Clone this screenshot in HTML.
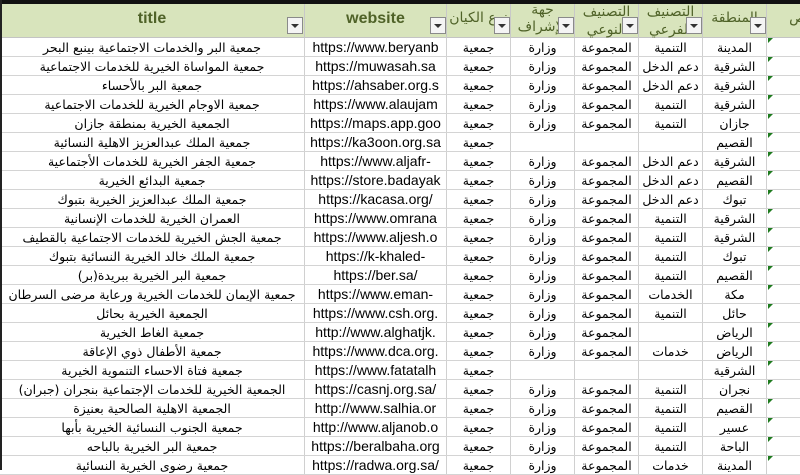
<!DOCTYPE html>
<html><head><meta charset="utf-8">
<style>
*{margin:0;padding:0;box-sizing:border-box}
body{width:800px;height:470px;overflow:hidden;background:#fff;position:relative;font-family:"DejaVu Sans","Liberation Sans",sans-serif}
.top{position:absolute;left:0;top:0;width:800px;height:4px;background:#111}
.hdr{position:absolute;left:0;top:4px;width:800px;height:34px;background:#d8e4bc;border-bottom:1px solid #c4c4c4}
.row{position:absolute;left:0;width:800px;height:19px;border-bottom:1px solid #d4d4d4}
.c{position:absolute;top:0;height:100%;border-right:1px solid #d0d0d0;display:flex;justify-content:center;align-items:center;overflow:hidden;white-space:nowrap}
.ar{direction:rtl;font-size:12.5px;color:#000}
.url{font-family:"Liberation Sans",sans-serif;font-size:14px;color:#000}
.h{position:absolute;top:0;height:34px;border-right:1px solid #c8c8c8;color:#4f6228;font-weight:bold;overflow:hidden}
.h .t{position:absolute;width:100%;text-align:center}
.fb{position:absolute;width:16px;height:17px;background:#f4f4f4;border:1px solid #8a8a8a;top:13px}
.fb:after{content:"";position:absolute;left:3px;top:6px;border-left:4px solid transparent;border-right:4px solid transparent;border-top:4px solid #333}
.tri{position:absolute;left:768px;width:0;height:0;border-top:5px solid #1e7b1e;border-right:5px solid transparent}
.left{position:absolute;left:0;top:0;width:2px;height:470px;background:#222}
</style></head><body>
<div class="top"></div>
<div class="hdr">
 <div class="h" style="left:0;width:305px"><div class="t" style="top:6px;font-family:'Liberation Sans',sans-serif;font-size:16px">title</div><div class="fb" style="left:287px"></div></div>
 <div class="h" style="left:305px;width:142px"><div class="t" style="top:6px;font-family:'Liberation Sans',sans-serif;font-size:16px">website</div><div class="fb" style="left:125px"></div></div>
 <div class="h" style="left:447px;width:64px"><div class="t ar" style="top:6px;font-size:14px;color:#4f6228;font-weight:normal">نوع الكيان</div><div class="fb" style="left:47px"></div></div>
 <div class="h" style="left:511px;width:64px"><div class="t ar" style="top:-2px;font-size:14px;color:#4f6228;font-weight:normal;line-height:17px">جهة<br>الإشراف</div><div class="fb" style="left:47px"></div></div>
 <div class="h" style="left:575px;width:64px"><div class="t ar" style="top:-1px;font-size:14px;color:#4f6228;font-weight:normal;line-height:18px">التصنيف<br>النوعي</div><div class="fb" style="left:47px"></div></div>
 <div class="h" style="left:639px;width:64px"><div class="t ar" style="top:-1px;font-size:14px;color:#4f6228;font-weight:normal;line-height:18px">التصنيف<br>الفرعي</div><div class="fb" style="left:47px"></div></div>
 <div class="h" style="left:703px;width:64px"><div class="t ar" style="top:6px;font-size:14px;color:#4f6228;font-weight:normal">المنطقة</div><div class="fb" style="left:47px"></div></div>
 <div class="h" style="left:767px;width:33px;border-right:none"><div class="ar" style="position:absolute;right:-6px;top:6px;font-size:14px;color:#4f6228;font-weight:normal">ص</div></div>
</div>

<div class="row" style="top:38px"><div class="c ar" style="left:0;width:305px">جمعية البر والخدمات الاجتماعية بينبع البحر</div><div class="c url" style="left:305px;width:142px">https://www.beryanb</div><div class="c ar" style="left:447px;width:64px">جمعية</div><div class="c ar" style="left:511px;width:64px">وزارة</div><div class="c ar" style="left:575px;width:64px">المجموعة</div><div class="c ar" style="left:639px;width:64px">التنمية</div><div class="c ar" style="left:703px;width:64px">المدينة</div><div class="tri"></div></div>
<div class="row" style="top:57px"><div class="c ar" style="left:0;width:305px">جمعية المواساة الخيرية للخدمات الاجتماعية</div><div class="c url" style="left:305px;width:142px">https://muwasah.sa</div><div class="c ar" style="left:447px;width:64px">جمعية</div><div class="c ar" style="left:511px;width:64px">وزارة</div><div class="c ar" style="left:575px;width:64px">المجموعة</div><div class="c ar" style="left:639px;width:64px">دعم الدخل</div><div class="c ar" style="left:703px;width:64px">الشرقية</div><div class="tri"></div></div>
<div class="row" style="top:76px"><div class="c ar" style="left:0;width:305px">جمعية البر بالأحساء</div><div class="c url" style="left:305px;width:142px">https://ahsaber.org.s</div><div class="c ar" style="left:447px;width:64px">جمعية</div><div class="c ar" style="left:511px;width:64px">وزارة</div><div class="c ar" style="left:575px;width:64px">المجموعة</div><div class="c ar" style="left:639px;width:64px">دعم الدخل</div><div class="c ar" style="left:703px;width:64px">الشرقية</div><div class="tri"></div></div>
<div class="row" style="top:95px"><div class="c ar" style="left:0;width:305px">جمعية الاوجام الخيرية للخدمات الاجتماعية</div><div class="c url" style="left:305px;width:142px">https://www.alaujam</div><div class="c ar" style="left:447px;width:64px">جمعية</div><div class="c ar" style="left:511px;width:64px">وزارة</div><div class="c ar" style="left:575px;width:64px">المجموعة</div><div class="c ar" style="left:639px;width:64px">التنمية</div><div class="c ar" style="left:703px;width:64px">الشرقية</div><div class="tri"></div></div>
<div class="row" style="top:114px"><div class="c ar" style="left:0;width:305px">الجمعية الخيرية بمنطقة جازان</div><div class="c url" style="left:305px;width:142px">https://maps.app.goo</div><div class="c ar" style="left:447px;width:64px">جمعية</div><div class="c ar" style="left:511px;width:64px">وزارة</div><div class="c ar" style="left:575px;width:64px">المجموعة</div><div class="c ar" style="left:639px;width:64px">التنمية</div><div class="c ar" style="left:703px;width:64px">جازان</div><div class="tri"></div></div>
<div class="row" style="top:133px"><div class="c ar" style="left:0;width:305px">جمعية الملك عبدالعزيز الاهلية النسائية</div><div class="c url" style="left:305px;width:142px">https://ka3oon.org.sa</div><div class="c ar" style="left:447px;width:64px">جمعية</div><div class="c ar" style="left:511px;width:64px"></div><div class="c ar" style="left:575px;width:64px"></div><div class="c ar" style="left:639px;width:64px"></div><div class="c ar" style="left:703px;width:64px">القصيم</div><div class="tri"></div></div>
<div class="row" style="top:152px"><div class="c ar" style="left:0;width:305px">جمعية الجفر الخيرية للخدمات الأجتماعية</div><div class="c url" style="left:305px;width:142px">https://www.aljafr-</div><div class="c ar" style="left:447px;width:64px">جمعية</div><div class="c ar" style="left:511px;width:64px">وزارة</div><div class="c ar" style="left:575px;width:64px">المجموعة</div><div class="c ar" style="left:639px;width:64px">دعم الدخل</div><div class="c ar" style="left:703px;width:64px">الشرقية</div><div class="tri"></div></div>
<div class="row" style="top:171px"><div class="c ar" style="left:0;width:305px">جمعية البدائع الخيرية</div><div class="c url" style="left:305px;width:142px">https://store.badayak</div><div class="c ar" style="left:447px;width:64px">جمعية</div><div class="c ar" style="left:511px;width:64px">وزارة</div><div class="c ar" style="left:575px;width:64px">المجموعة</div><div class="c ar" style="left:639px;width:64px">دعم الدخل</div><div class="c ar" style="left:703px;width:64px">القصيم</div><div class="tri"></div></div>
<div class="row" style="top:190px"><div class="c ar" style="left:0;width:305px">جمعية الملك عبدالعزيز الخيرية بتبوك</div><div class="c url" style="left:305px;width:142px">https://kacasa.org/</div><div class="c ar" style="left:447px;width:64px">جمعية</div><div class="c ar" style="left:511px;width:64px">وزارة</div><div class="c ar" style="left:575px;width:64px">المجموعة</div><div class="c ar" style="left:639px;width:64px">دعم الدخل</div><div class="c ar" style="left:703px;width:64px">تبوك</div><div class="tri"></div></div>
<div class="row" style="top:209px"><div class="c ar" style="left:0;width:305px">العمران الخيرية للخدمات الإنسانية</div><div class="c url" style="left:305px;width:142px">https://www.omrana</div><div class="c ar" style="left:447px;width:64px">جمعية</div><div class="c ar" style="left:511px;width:64px">وزارة</div><div class="c ar" style="left:575px;width:64px">المجموعة</div><div class="c ar" style="left:639px;width:64px">التنمية</div><div class="c ar" style="left:703px;width:64px">الشرقية</div><div class="tri"></div></div>
<div class="row" style="top:228px"><div class="c ar" style="left:0;width:305px">جمعية الجش الخيرية للخدمات الاجتماعية بالقطيف</div><div class="c url" style="left:305px;width:142px">https://www.aljesh.o</div><div class="c ar" style="left:447px;width:64px">جمعية</div><div class="c ar" style="left:511px;width:64px">وزارة</div><div class="c ar" style="left:575px;width:64px">المجموعة</div><div class="c ar" style="left:639px;width:64px">التنمية</div><div class="c ar" style="left:703px;width:64px">الشرقية</div><div class="tri"></div></div>
<div class="row" style="top:247px"><div class="c ar" style="left:0;width:305px">جمعية الملك خالد الخيرية النسائية بتبوك</div><div class="c url" style="left:305px;width:142px">https://k-khaled-</div><div class="c ar" style="left:447px;width:64px">جمعية</div><div class="c ar" style="left:511px;width:64px">وزارة</div><div class="c ar" style="left:575px;width:64px">المجموعة</div><div class="c ar" style="left:639px;width:64px">التنمية</div><div class="c ar" style="left:703px;width:64px">تبوك</div><div class="tri"></div></div>
<div class="row" style="top:266px"><div class="c ar" style="left:0;width:305px">جمعية البر الخيرية ببريدة(بر)</div><div class="c url" style="left:305px;width:142px">https://ber.sa/</div><div class="c ar" style="left:447px;width:64px">جمعية</div><div class="c ar" style="left:511px;width:64px">وزارة</div><div class="c ar" style="left:575px;width:64px">المجموعة</div><div class="c ar" style="left:639px;width:64px">التنمية</div><div class="c ar" style="left:703px;width:64px">القصيم</div><div class="tri"></div></div>
<div class="row" style="top:285px"><div class="c ar" style="left:0;width:305px">جمعية الإيمان للخدمات الخيرية ورعاية مرضى السرطان</div><div class="c url" style="left:305px;width:142px">https://www.eman-</div><div class="c ar" style="left:447px;width:64px">جمعية</div><div class="c ar" style="left:511px;width:64px">وزارة</div><div class="c ar" style="left:575px;width:64px">المجموعة</div><div class="c ar" style="left:639px;width:64px">الخدمات</div><div class="c ar" style="left:703px;width:64px">مكة</div><div class="tri"></div></div>
<div class="row" style="top:304px"><div class="c ar" style="left:0;width:305px">الجمعية الخيرية بحائل</div><div class="c url" style="left:305px;width:142px">https://www.csh.org.</div><div class="c ar" style="left:447px;width:64px">جمعية</div><div class="c ar" style="left:511px;width:64px">وزارة</div><div class="c ar" style="left:575px;width:64px">المجموعة</div><div class="c ar" style="left:639px;width:64px">التنمية</div><div class="c ar" style="left:703px;width:64px">حائل</div><div class="tri"></div></div>
<div class="row" style="top:323px"><div class="c ar" style="left:0;width:305px">جمعية الغاط الخيرية</div><div class="c url" style="left:305px;width:142px">http://www.alghatjk.</div><div class="c ar" style="left:447px;width:64px">جمعية</div><div class="c ar" style="left:511px;width:64px">وزارة</div><div class="c ar" style="left:575px;width:64px">المجموعة</div><div class="c ar" style="left:639px;width:64px"></div><div class="c ar" style="left:703px;width:64px">الرياض</div><div class="tri"></div></div>
<div class="row" style="top:342px"><div class="c ar" style="left:0;width:305px">جمعية الأطفال ذوي الإعاقة</div><div class="c url" style="left:305px;width:142px">https://www.dca.org.</div><div class="c ar" style="left:447px;width:64px">جمعية</div><div class="c ar" style="left:511px;width:64px">وزارة</div><div class="c ar" style="left:575px;width:64px">المجموعة</div><div class="c ar" style="left:639px;width:64px">خدمات</div><div class="c ar" style="left:703px;width:64px">الرياض</div><div class="tri"></div></div>
<div class="row" style="top:361px"><div class="c ar" style="left:0;width:305px">جمعية فتاة الاحساء التنموية الخيرية</div><div class="c url" style="left:305px;width:142px">https://www.fatatalh</div><div class="c ar" style="left:447px;width:64px">جمعية</div><div class="c ar" style="left:511px;width:64px"></div><div class="c ar" style="left:575px;width:64px"></div><div class="c ar" style="left:639px;width:64px"></div><div class="c ar" style="left:703px;width:64px">الشرقية</div><div class="tri"></div></div>
<div class="row" style="top:380px"><div class="c ar" style="left:0;width:305px">الجمعية الخيرية للخدمات الإجتماعية بنجران (جبران)</div><div class="c url" style="left:305px;width:142px">https://casnj.org.sa/</div><div class="c ar" style="left:447px;width:64px">جمعية</div><div class="c ar" style="left:511px;width:64px">وزارة</div><div class="c ar" style="left:575px;width:64px">المجموعة</div><div class="c ar" style="left:639px;width:64px">التنمية</div><div class="c ar" style="left:703px;width:64px">نجران</div><div class="tri"></div></div>
<div class="row" style="top:399px"><div class="c ar" style="left:0;width:305px">الجمعية الاهلية الصالحية بعنيزة</div><div class="c url" style="left:305px;width:142px">http://www.salhia.or</div><div class="c ar" style="left:447px;width:64px">جمعية</div><div class="c ar" style="left:511px;width:64px">وزارة</div><div class="c ar" style="left:575px;width:64px">المجموعة</div><div class="c ar" style="left:639px;width:64px">التنمية</div><div class="c ar" style="left:703px;width:64px">القصيم</div><div class="tri"></div></div>
<div class="row" style="top:418px"><div class="c ar" style="left:0;width:305px">جمعية الجنوب النسائية الخيرية بأبها</div><div class="c url" style="left:305px;width:142px">http://www.aljanob.o</div><div class="c ar" style="left:447px;width:64px">جمعية</div><div class="c ar" style="left:511px;width:64px">وزارة</div><div class="c ar" style="left:575px;width:64px">المجموعة</div><div class="c ar" style="left:639px;width:64px">التنمية</div><div class="c ar" style="left:703px;width:64px">عسير</div><div class="tri"></div></div>
<div class="row" style="top:437px"><div class="c ar" style="left:0;width:305px">جمعية البر الخيرية بالباحه</div><div class="c url" style="left:305px;width:142px">https://beralbaha.org</div><div class="c ar" style="left:447px;width:64px">جمعية</div><div class="c ar" style="left:511px;width:64px">وزارة</div><div class="c ar" style="left:575px;width:64px">المجموعة</div><div class="c ar" style="left:639px;width:64px">التنمية</div><div class="c ar" style="left:703px;width:64px">الباحة</div><div class="tri"></div></div>
<div class="row" style="top:456px"><div class="c ar" style="left:0;width:305px">جمعية رضوى الخيرية النسائية</div><div class="c url" style="left:305px;width:142px">https://radwa.org.sa/</div><div class="c ar" style="left:447px;width:64px">جمعية</div><div class="c ar" style="left:511px;width:64px">وزارة</div><div class="c ar" style="left:575px;width:64px">المجموعة</div><div class="c ar" style="left:639px;width:64px">خدمات</div><div class="c ar" style="left:703px;width:64px">المدينة</div><div class="tri"></div></div>
<div class="left"></div>
</body></html>
